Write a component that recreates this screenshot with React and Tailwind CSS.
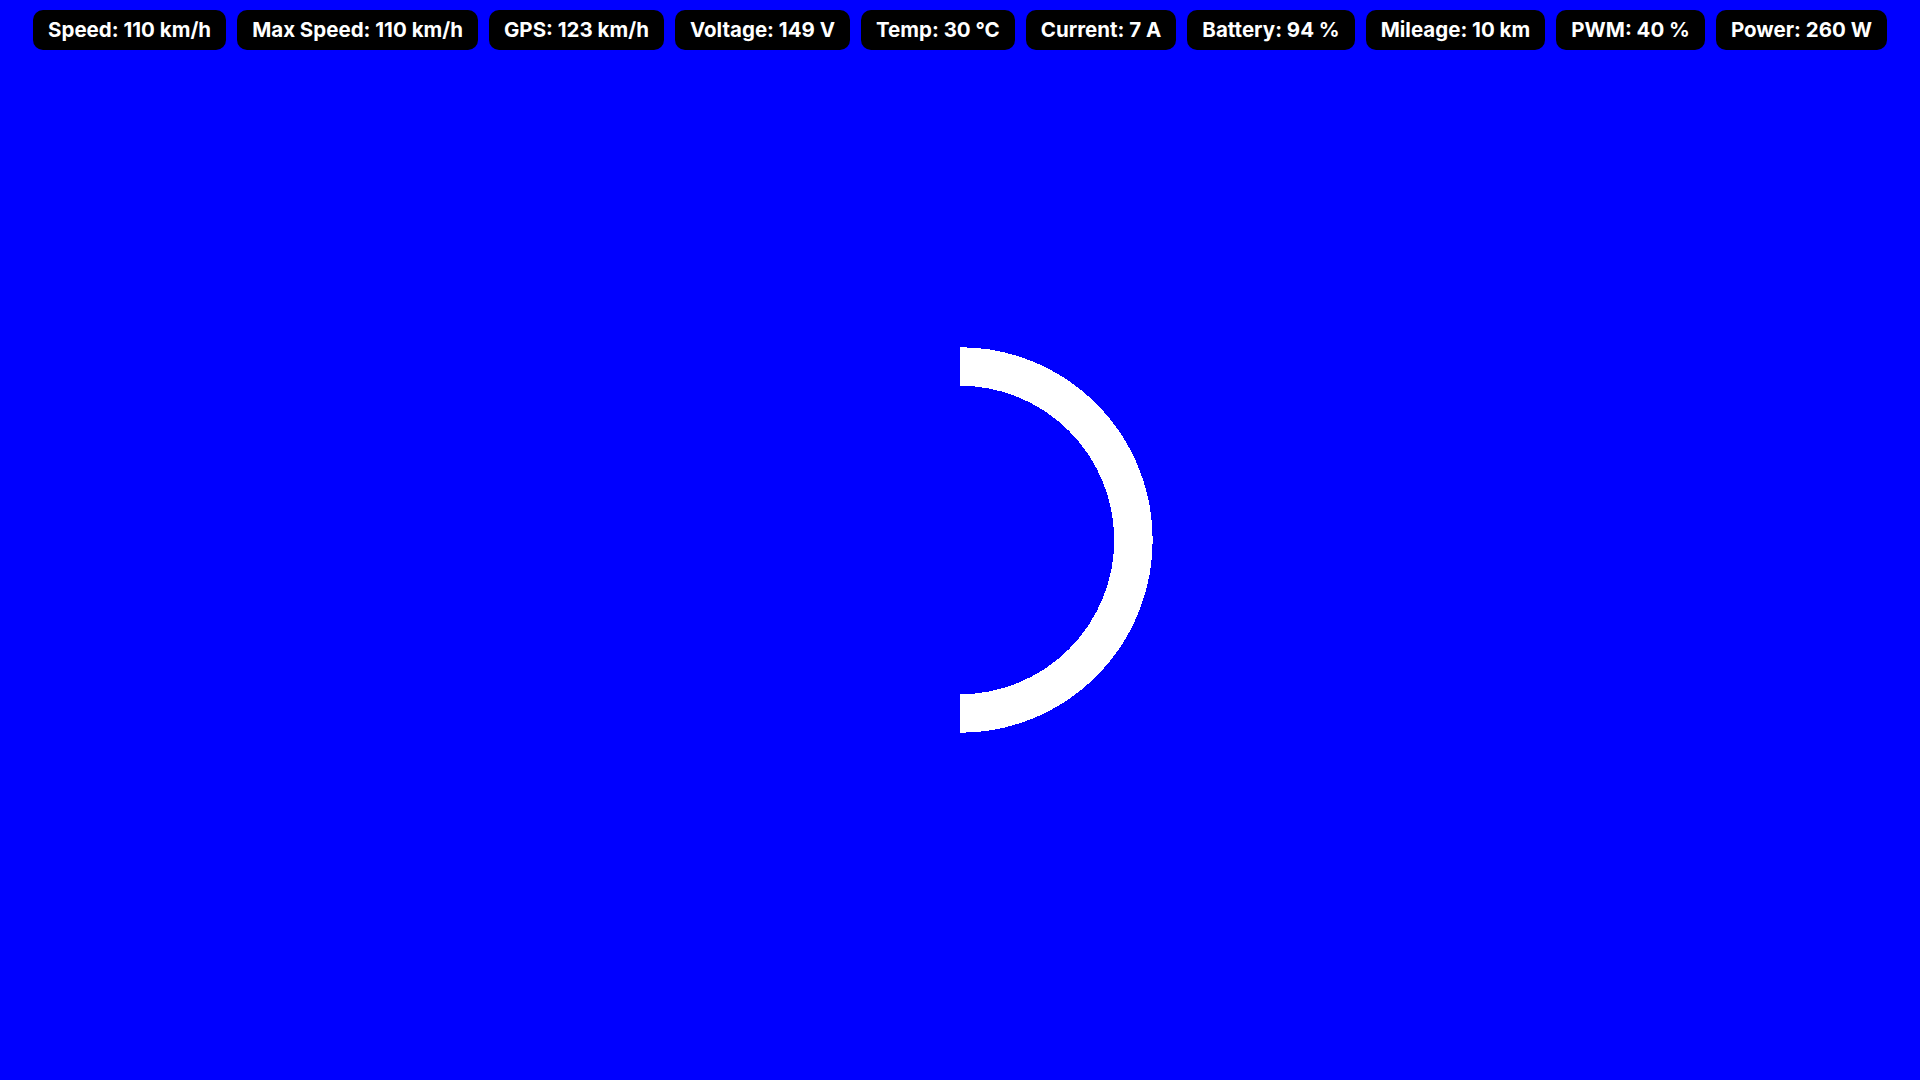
const stats = [
	{ label: 'Speed', value: '110 km/h' },
	{ label: 'Max Speed', value: '110 km/h' },
	{ label: 'GPS', value: '123 km/h' },
	{ label: 'Voltage', value: '149 V' },
	{ label: 'Temp', value: '30 °C' },
	{ label: 'Current', value: '7 A' },
	{ label: 'Battery', value: '94 %' },
	{ label: 'Mileage', value: '10 km' },
	{ label: 'PWM', value: '40 %' },
	{ label: 'Power', value: '260 W' },
];

function StatPill({ label, value }) {
	return (
		<div className="bg-black text-white rounded-[10px] px-[15px] h-10 flex items-center text-[20.5px] font-bold leading-none whitespace-nowrap">
			{label}: {value}
		</div>
	);
}

function Spinner() {
	return (
		<svg width="400" height="400" viewBox="0 0 400 400" shapeRendering="crispEdges">
			<path d="M 200 26.5 A 173.5 173.5 0 0 1 200 373.5" fill="none" stroke="#ffffff" strokeWidth="38.5" />
		</svg>
	);
}

export default function App() {
	return (
		<div className="relative w-full h-screen bg-[#0000ff] overflow-hidden" style={{ fontFamily: 'Inter, "Noto Sans", sans-serif' }}>
			<div className="flex justify-center gap-[11px] pt-[10px]">
				{stats.map((s) => (
					<StatPill key={s.label} {...s} />
				))}
			</div>
			<div className="absolute inset-0 flex items-center justify-center pointer-events-none">
				<Spinner />
			</div>
		</div>
	);
}
